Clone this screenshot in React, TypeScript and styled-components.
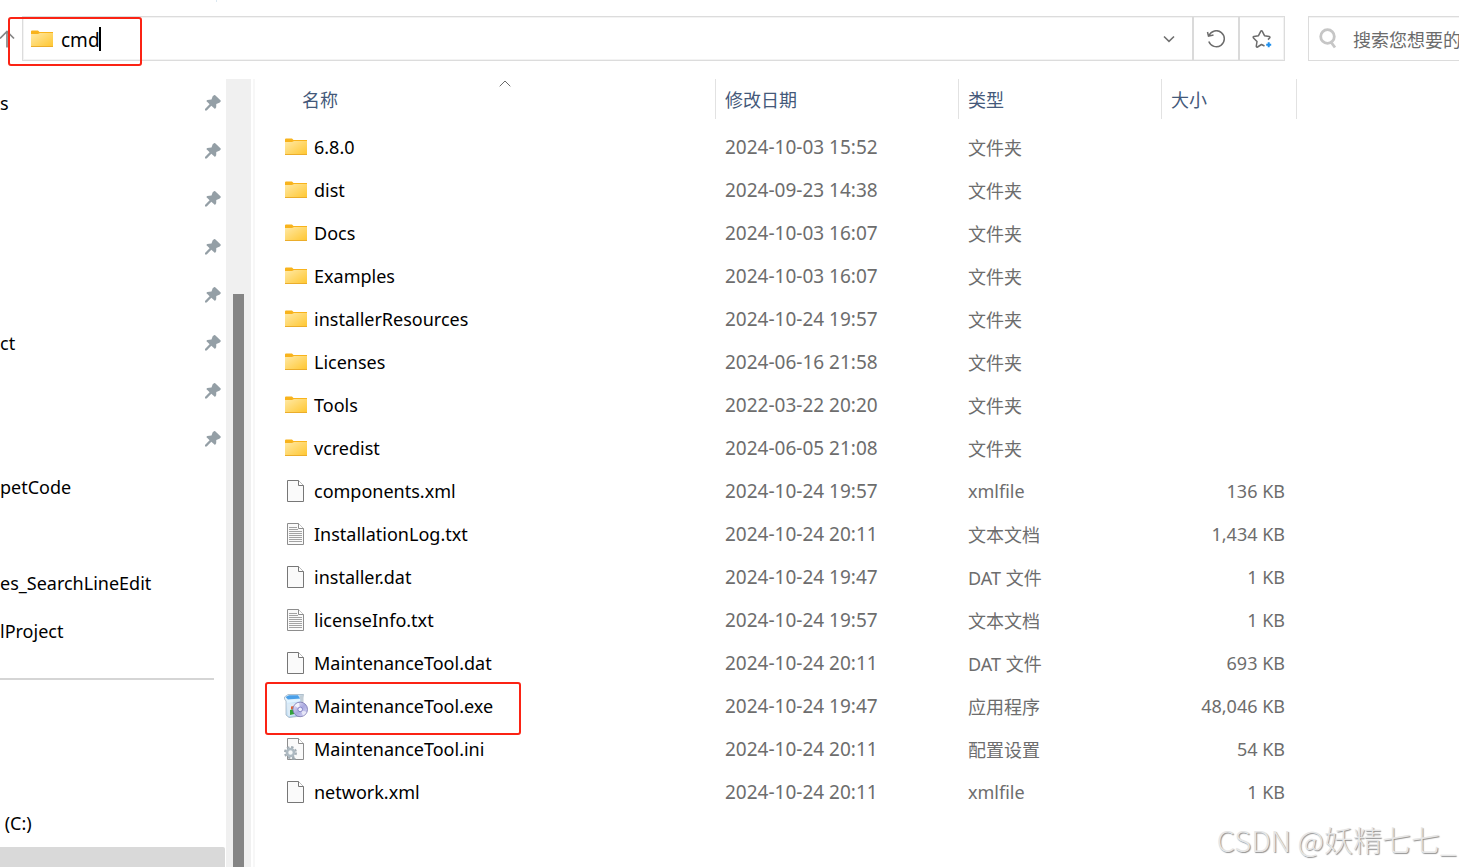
import React from 'react';
import styled, { createGlobalStyle } from 'styled-components';

const GlobalStyle = createGlobalStyle`
  * { box-sizing: border-box; }
  body {
    margin: 0;
    background: #fff;
    color: #000;
    font-family: "Noto Sans", "Noto Sans CJK SC", sans-serif;
    font-size: 18px;
  }
  button, input { font: inherit; color: inherit; }
  svg { flex: none; }
`;

const Window = styled.div`
  position: relative;
  display: flex;
  flex-direction: column;
  height: 100vh;
  overflow: hidden;
  background: #fff;
`;

const RibbonEdge = styled.div`
  flex: none;
  width: 217px;
  height: 2px;
  margin-bottom: 14px;
  border-right: 1px solid #dbe8f1;
`;

const Toolbar = styled.header`
  display: flex;
  flex: none;
  height: 45px;
  margin-bottom: 18px;
`;

const UpButton = styled.button`
  flex: none;
  display: flex;
  align-items: center;
  width: 22px;
  padding: 0;
  border: 0;
  background: none;
  overflow: hidden;
`;

const AddressBar = styled.div`
  position: relative;
  display: flex;
  flex: 1;
  min-width: 0;
  border: 1px solid #dcdcdc;
  box-shadow: inset 0 0 0 1px #f3f3f3;
`;

const PathField = styled.label`
  display: flex;
  flex: 1;
  align-items: center;
  padding-left: 8px;
  min-width: 0;
`;

const PathInput = styled.input`
  width: 38px;
  height: 30px;
  margin-left: 8px;
  padding: 2px 0 0;
  border: 0;
  outline: 0;
  background: none;
  font-size: 19px;
`;

const Caret = styled.span`
  width: 2px;
  height: 24px;
  background: #000;
`;

const BarButton = styled.button<{ $divided?: boolean }>`
  display: flex;
  flex: none;
  align-items: center;
  justify-content: center;
  width: 46px;
  padding: 0;
  border: 0;
  border-left: ${(p) => (p.$divided ? '2px solid #dadada' : '0')};
  background: none;
`;

const SearchBox = styled.label`
  display: flex;
  flex: none;
  align-items: center;
  width: 151px;
  margin-left: 23px;
  padding-left: 10px;
  border: 1px solid #dcdcdc;
  border-right: 0;
  box-shadow: inset 0 1px 0 #f3f3f3;
  overflow: hidden;
`;

const SearchInput = styled.input`
  flex: none;
  width: 180px;
  height: 30px;
  margin-left: 16px;
  padding: 2px 0 0;
  border: 0;
  outline: 0;
  background: none;
  &::placeholder { color: #6b6b6b; opacity: 1; }
`;

const Highlight = styled.span<{ $box: 'address' | 'file' }>`
  position: absolute;
  pointer-events: none;
  border: 2px solid #fb2314;
  border-radius: 3px;
  ${(p) =>
    p.$box === 'address'
      ? 'left: -15px; top: 0; width: 134px; height: 49px;'
      : 'left: 10px; top: -2px; width: 256px; height: 53px;'}
`;

const Body = styled.div`
  display: flex;
  flex: 1;
  min-height: 0;
`;

const Sidebar = styled.nav`
  flex: none;
  width: 226px;
  overflow: hidden;
`;

const NavList = styled.ul`
  margin: 0;
  padding: 0;
  list-style: none;
`;

const NavItem = styled.li<{ $selected?: boolean }>`
  display: flex;
  align-items: center;
  justify-content: space-between;
  height: 48px;
  margin-right: 1px;
  padding-right: 4px;
  border-radius: 0 2px 2px 0;
  background: ${(p) => (p.$selected ? '#d9d9d9' : 'transparent')};
`;

const NavLink = styled.a`
  flex: 1;
  color: inherit;
  text-decoration: none;
  white-space: pre;
`;

const Divider = styled.li`
  height: 48px;
  margin-right: 12px;
  padding-top: 23px;
  &::before {
    content: '';
    display: block;
    height: 2px;
    background: #d5d5d5;
  }
`;

const ScrollTrack = styled.div`
  flex: none;
  width: 25px;
  padding: 215px 7px 0;
  background: #f0f0f0;
`;

const ScrollThumb = styled.div`
  height: 100%;
  background: #858585;
`;

const Splitter = styled.div`
  flex: none;
  width: 4px;
  border-right: 2px solid #f7f7f7;
`;

const Content = styled.main`
  flex: 1;
  min-width: 0;
  padding-right: 162px;
`;

const FileTable = styled.table`
  width: 100%;
  table-layout: fixed;
  border-spacing: 0;
`;

const Col = styled.col<{ $width?: number }>`
  width: ${(p) => (p.$width ? `${p.$width}px` : 'auto')};
`;

const HeadCell = styled.th`
  padding: 0 0 6px;
  font-weight: 400;
`;

const SortButton = styled.button<{ $kind: 'name' | 'plain' | 'last' }>`
  position: relative;
  display: block;
  width: 100%;
  height: 40px;
  padding: 0 0 0 ${(p) => (p.$kind === 'name' ? 47 : 9)}px;
  border: 0 solid #e2e2e2;
  border-left-width: ${(p) => (p.$kind === 'name' ? 0 : 1)}px;
  border-right-width: ${(p) => (p.$kind === 'last' ? 1 : 0)}px;
  background: none;
  color: #44597a;
  text-align: left;
`;

const SortMark = styled.svg`
  position: absolute;
  top: 1px;
  left: 50%;
  margin-left: 14px;
`;

const Cell = styled.td<{ $kind?: 'date' | 'size' }>`
  height: 43px;
  padding: ${(p) => (p.$kind === 'size' ? '0 12px 0 0' : '0 0 0 10px')};
  color: #6d6d6d;
  font-size: ${(p) => (p.$kind === 'date' ? 19 : 18)}px;
  text-align: ${(p) => (p.$kind === 'size' ? 'right' : 'left')};
  white-space: nowrap;
`;

const NameCell = styled.td`
  position: relative;
  height: 43px;
  padding: 0 0 0 29px;
`;

const FileName = styled.div`
  display: flex;
  align-items: center;
  gap: 6px;
  white-space: nowrap;
`;

const IconSlot = styled.span`
  display: flex;
  flex: none;
  justify-content: center;
  width: 24px;
`;

const Watermark = styled.div`
  position: absolute;
  right: 3px;
  bottom: 8px;
  color: #e6e6e6;
  font-family: "Noto Sans CJK SC", sans-serif;
  font-size: 29px;
  font-weight: 300;
  line-height: 40px;
  text-shadow: 1px 1px 1px #8f8f8f;
  white-space: nowrap;
`;

type Kind = 'folder' | 'file' | 'text' | 'exe' | 'ini';

const FolderIcon = () => (
  <svg width="22" height="18" viewBox="0 0 22 18" aria-hidden="true">
    <defs>
      <linearGradient id="folder" x1="0" y1="0" x2="1" y2="1">
        <stop offset="0" stopColor="#ffe9a6" />
        <stop offset="1" stopColor="#ffc62e" />
      </linearGradient>
    </defs>
    <path d="M0 1.5Q0 .5 1 .5H7L8.500 2H22V8H0Z" fill="#f8b31c" />
    <path d="M0 4H7L9 3H22V17H0Z" fill="url(#folder)" />
    <path d="M0 16.500H22" stroke="#ebad2b" />
  </svg>
);

const Page = ({ stroke = '#777' }: { stroke?: string }) => (
  <>
    <path d="M.5 .5H11.5L16.5 5.5V21.5H.5Z" fill="#fafafa" stroke={stroke} />
    <path d="M11.5 .5V5.5H16.5" fill="#fff" stroke={stroke} />
  </>
);

const FileIcon = () => (
  <svg width="18" height="22" viewBox="0 0 18 22" aria-hidden="true">
    <Page />
  </svg>
);

const TextIcon = () => (
  <svg width="18" height="22" viewBox="0 0 18 22" aria-hidden="true">
    <Page stroke="#8d8d8d" />
    <path
      d="M2 4.5H10M2 6.5H11M2 8.5H15M2 10.5H15M2 12.5H15M2 14.5H15M2 16.5H15M2 18.5H15"
      stroke="#a3a3a3"
    />
  </svg>
);

const ExeIcon = () => (
  <svg width="24" height="24" viewBox="0 0 24 24" aria-hidden="true">
    <defs>
      <linearGradient id="box" x1="0" y1="0" x2="1" y2="1">
        <stop offset="0" stopColor="#eef8ff" />
        <stop offset="1" stopColor="#9cc9ee" />
      </linearGradient>
      <linearGradient id="disc" x1="0" y1="0" x2="1" y2="1">
        <stop offset="0" stopColor="#f2f1ff" />
        <stop offset=".5" stopColor="#aaa9df" />
        <stop offset="1" stopColor="#dcdcf8" />
      </linearGradient>
    </defs>
    <path d="M.5 3L4 .5H19.500L18.500 4V9L17 22L5 23.500L2 21V7L.5 5Z" fill="url(#box)" stroke="#9aabb9" strokeWidth=".7" />
    <path d="M1.500 3L5 1.200H14L16 4.500L4 5.500Z" fill="#4a9fe8" />
    <path d="M3 6L16 5V7.500L3 8.800Z" fill="#e2f4ff" />
    <path d="M15.500 1.500L19.500 1V8L17 9Z" fill="#c3ced6" />
    <path d="M3 10L12 9V21L4 22Z" fill="#dcebf6" />
    <path d="M7 12.500L10.500 12V15L7 15.500Z" fill="#e8612a" />
    <path d="M6 16L10.500 15V20L6 21Z" fill="#30a33a" />
    <circle cx="16.200" cy="15.400" r="7.300" fill="url(#disc)" stroke="#7774ad" strokeWidth=".8" />
    <path d="M16.200 15.400L10.500 11.500A7 7 0 0 1 15 8.700Z" fill="#fff" opacity=".75" />
    <path d="M16.200 15.400L22.500 18A7 7 0 0 1 19 21.800Z" fill="#fff" opacity=".6" />
    <circle cx="16.200" cy="15.400" r="2.300" fill="#eeeefd" stroke="#7c7ac0" strokeWidth=".9" />
  </svg>
);

const IniIcon = () => (
  <svg width="24" height="24" viewBox="0 0 24 24" aria-hidden="true">
    <g transform="translate(3 1)">
      <Page stroke="#8d8d8d" />
    </g>
    <circle cx="6.500" cy="15.500" r="5.400" fill="none" stroke="#a3adb4" strokeWidth="2.200" strokeDasharray="2.400 1.840" />
    <circle cx="6.500" cy="15.500" r="3.500" fill="#f4f7f8" stroke="#adb9c1" strokeWidth="2.600" />
    <path d="M7 22.500L9 20.500L12 21.500L11 23Z" fill="#9ea8ae" />
  </svg>
);

const PinIcon = () => (
  <svg width="16" height="16" viewBox="0 0 16 16" aria-hidden="true">
    <path
      d="M9.300 0L10.200 .2L15.700 5.600V6.600L14.400 7.700L11.300 9L11.200 12.300L10 14L6.300 10.700L1.700 15.600H0V14L4.600 9.300L1.300 6L2.300 4.900L6.500 4.600L7.700 1.300Z"
      fill="#949fa6"
    />
  </svg>
);

const icons: Record<Kind, () => React.JSX.Element> = {
  folder: FolderIcon,
  file: FileIcon,
  text: TextIcon,
  exe: ExeIcon,
  ini: IniIcon,
};

const files: [Kind, string, string, string, string][] = [
  ['folder', '6.8.0', '2024-10-03 15:52', '文件夹', ''],
  ['folder', 'dist', '2024-09-23 14:38', '文件夹', ''],
  ['folder', 'Docs', '2024-10-03 16:07', '文件夹', ''],
  ['folder', 'Examples', '2024-10-03 16:07', '文件夹', ''],
  ['folder', 'installerResources', '2024-10-24 19:57', '文件夹', ''],
  ['folder', 'Licenses', '2024-06-16 21:58', '文件夹', ''],
  ['folder', 'Tools', '2022-03-22 20:20', '文件夹', ''],
  ['folder', 'vcredist', '2024-06-05 21:08', '文件夹', ''],
  ['file', 'components.xml', '2024-10-24 19:57', 'xmlfile', '136 KB'],
  ['text', 'InstallationLog.txt', '2024-10-24 20:11', '文本文档', '1,434 KB'],
  ['file', 'installer.dat', '2024-10-24 19:47', 'DAT 文件', '1 KB'],
  ['text', 'licenseInfo.txt', '2024-10-24 19:57', '文本文档', '1 KB'],
  ['file', 'MaintenanceTool.dat', '2024-10-24 20:11', 'DAT 文件', '693 KB'],
  ['exe', 'MaintenanceTool.exe', '2024-10-24 19:47', '应用程序', '48,046 KB'],
  ['ini', 'MaintenanceTool.ini', '2024-10-24 20:11', '配置设置', '54 KB'],
  ['file', 'network.xml', '2024-10-24 20:11', 'xmlfile', '1 KB'],
];

const pinned = ['s', '', '', '', '', 'ct', '', ''];
const recent = ['petCode', '', 'es_SearchLineEdit', 'lProject'];
const drives = ['', '', ' (C:)'];

export default function App() {
  return (
    <Window>
      <GlobalStyle />
      <RibbonEdge />
      <Toolbar>
        <UpButton aria-label="Up">
          <svg width="15" height="18" viewBox="0 0 15 18" fill="none" stroke="#858585" strokeWidth="1.700">
            <path d="M7 17.500V2M0 8.500L7 1.500L14 8.500" />
          </svg>
        </UpButton>
        <AddressBar>
          <PathField>
            <FolderIcon />
            <PathInput aria-label="Address" defaultValue="cmd" />
            <Caret />
          </PathField>
          <BarButton aria-label="History">
            <svg width="12" height="8" viewBox="0 0 12 8" fill="none" stroke="#707070" strokeWidth="1.600">
              <path d="M1 1.500L6 6.300L11 1.500" />
            </svg>
          </BarButton>
          <BarButton $divided aria-label="Refresh">
            <svg width="20" height="18" viewBox="0 0 20 18" fill="none" stroke="#6c6c6c" strokeWidth="1.500">
              <path d="M3 5.500A8 8 0 1 1 2.800 11.500M1.500 2L2.500 6.200L7.500 5" />
            </svg>
          </BarButton>
          <BarButton $divided aria-label="Add to favorites">
            <svg width="20" height="20" viewBox="0 0 20 20" fill="none" stroke="#6c6c6c" strokeWidth="1.500" strokeLinejoin="round">
              <path d="M12.500 17L9.500 15.500L5.500 18Q4.200 18.500 4.300 17L5 12.500L1.500 9Q.6 7.800 2 7.500L6.500 6.700L8.700 2.300Q9.500 1.200 10.300 2.300L12.500 6.700L17.200 7.500Q18.500 7.900 17.600 9L16 10.600" />
              <path d="M16.700 13.200V18.200M14.200 15.700H19.200" stroke="#1f8fec" strokeWidth="2" />
            </svg>
          </BarButton>
          <Highlight $box="address" />
        </AddressBar>
        <SearchBox>
          <svg width="18" height="21" viewBox="0 0 18 21" fill="none" stroke="#c6c6c6" strokeWidth="2.800">
            <circle cx="8.500" cy="8.500" r="6.800" />
            <path d="M11.500 13.500L16 19.500" />
          </svg>
          <SearchInput aria-label="搜索" placeholder="搜索您想要的" />
        </SearchBox>
      </Toolbar>
      <Body>
        <Sidebar>
          <NavList>
            {pinned.map((label, i) => (
              <NavItem key={i}>
                <NavLink href="#">{label}</NavLink>
                <PinIcon />
              </NavItem>
            ))}
            {recent.map((label, i) => (
              <NavItem key={i}>
                <NavLink href="#">{label}</NavLink>
              </NavItem>
            ))}
            <Divider role="separator" />
            {drives.map((label, i) => (
              <NavItem key={i}>
                <NavLink href="#">{label}</NavLink>
              </NavItem>
            ))}
            <NavItem $selected />
          </NavList>
        </Sidebar>
        <ScrollTrack>
          <ScrollThumb />
        </ScrollTrack>
        <Splitter />
        <Content>
          <FileTable>
            <colgroup>
              <Col />
              <Col $width={243} />
              <Col $width={203} />
              <Col $width={136} />
            </colgroup>
            <thead>
              <tr>
                <HeadCell>
                  <SortButton $kind="name">
                    名称
                    <SortMark width="12" height="7" viewBox="0 0 12 7" fill="none" stroke="#6a6a6a">
                      <path d="M.7 6.300L6 1L11.300 6.300" />
                    </SortMark>
                  </SortButton>
                </HeadCell>
                <HeadCell>
                  <SortButton $kind="plain">修改日期</SortButton>
                </HeadCell>
                <HeadCell>
                  <SortButton $kind="plain">类型</SortButton>
                </HeadCell>
                <HeadCell>
                  <SortButton $kind="last">大小</SortButton>
                </HeadCell>
              </tr>
            </thead>
            <tbody>
              {files.map(([kind, name, date, type, size]) => {
                const Icon = icons[kind];
                return (
                  <tr key={name}>
                    <NameCell>
                      <FileName>
                        <IconSlot>
                          <Icon />
                        </IconSlot>
                        {name}
                      </FileName>
                      {kind === 'exe' && <Highlight $box="file" />}
                    </NameCell>
                    <Cell $kind="date">{date}</Cell>
                    <Cell>{type}</Cell>
                    <Cell $kind="size">{size}</Cell>
                  </tr>
                );
              })}
            </tbody>
          </FileTable>
        </Content>
      </Body>
      <Watermark>CSDN @妖精七七_</Watermark>
    </Window>
  );
}
